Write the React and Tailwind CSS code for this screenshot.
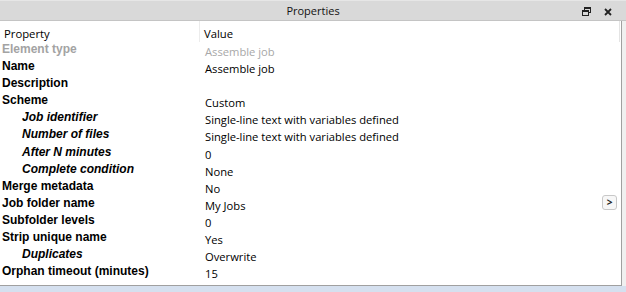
import React from 'react';

const rows = [
  { label: 'Element type', value: 'Assemble job', muted: true },
  { label: 'Name', value: 'Assemble job' },
  { label: 'Description', value: '' },
  { label: 'Scheme', value: 'Custom' },
  { label: 'Job identifier', value: 'Single-line text with variables defined', sub: true },
  { label: 'Number of files', value: 'Single-line text with variables defined', sub: true },
  { label: 'After N minutes', value: '0', sub: true },
  { label: 'Complete condition', value: 'None', sub: true },
  { label: 'Merge metadata', value: 'No' },
  { label: 'Job folder name', value: 'My Jobs', button: true },
  { label: 'Subfolder levels', value: '0' },
  { label: 'Strip unique name', value: 'Yes' },
  { label: 'Duplicates', value: 'Overwrite', sub: true },
  { label: 'Orphan timeout (minutes)', value: '15' },
];

const uiFont = { fontFamily: '"Open Sans", "Noto Sans", sans-serif' };
const labelFont = { fontFamily: '"Liberation Sans", Arial, sans-serif' };

const RestoreIcon = () => (
  <svg width="9" height="9" viewBox="0 0 9 9" className="block">
    <rect x="2.5" y="0.5" width="6" height="5" fill="none" stroke="#222" />
    <rect x="2" y="0" width="7" height="2" fill="#222" />
    <rect x="0.5" y="3.5" width="6" height="5" fill="#d9d9d9" stroke="#222" />
    <rect x="0" y="3" width="7" height="2" fill="#222" />
  </svg>
);

const CloseIcon = () => (
  <svg width="8" height="8" viewBox="0 0 8 8" className="block">
    <path d="M1 1 L7 7 M7 1 L1 7" stroke="#222" strokeWidth="1.8" />
  </svg>
);

export default function App() {
  return (
    <div className="w-[626px] h-[292px] bg-[#d5e0ef] flex flex-col overflow-hidden" style={uiFont}>
      {/* title bar */}
      <div className="h-[21px] bg-[#d9d9d9] border-t border-[#e6e6e6] border-b border-b-[#c4c4c4] flex items-center relative">
        <div className="flex-1 text-center text-[11px] text-[#111] leading-none">Properties</div>
        <div className="absolute right-[14px] top-[6px] flex items-center gap-[13px]">
          <RestoreIcon />
          <CloseIcon />
        </div>
      </div>

      {/* panel */}
      <div className="h-[265px] bg-[#f0f0f0] flex">
        <div className="w-[622px] bg-white border-r border-b border-[#a0a0a0] flex flex-col">
          <div className="h-[21px] flex text-[11.3px] text-black leading-none">
            <div className="w-[200px] pl-[4px] pt-[7px] border-r border-[#ececec]">Property</div>
            <div className="flex-1 pl-[4px] pt-[7px] border-r border-[#e4e4e4] mr-[1px]">Value</div>
          </div>
          {rows.map((r) => (
            <div key={r.label} className="h-[17.1px] flex relative">
              <div
                className={
                  'w-[201px] text-[12px] font-bold leading-[14px] whitespace-nowrap ' +
                  (r.sub ? 'italic pl-[22px] ' : 'pl-[2px] ') +
                  (r.muted ? 'text-[#a3a3a3]' : 'text-black')
                }
                style={labelFont}
              >
                {r.label}
              </div>
              <div
                className={
                  'flex-1 pl-[4px] pt-[2px] text-[11.2px] leading-[16px] ' +
                  (r.muted ? 'text-[#a8a8a8]' : 'text-black')
                }
              >
                {r.value}
              </div>
              {r.button && (
                <div className="absolute right-[4px] top-[-1px] w-[15px] h-[15px] rounded-[3px] border border-[#c8c8c8] bg-[#f7f7f7] flex items-center justify-center text-[10px] font-bold leading-none text-[#222]">
                  &gt;
                </div>
              )}
            </div>
          ))}
        </div>
      </div>
    </div>
  );
}
